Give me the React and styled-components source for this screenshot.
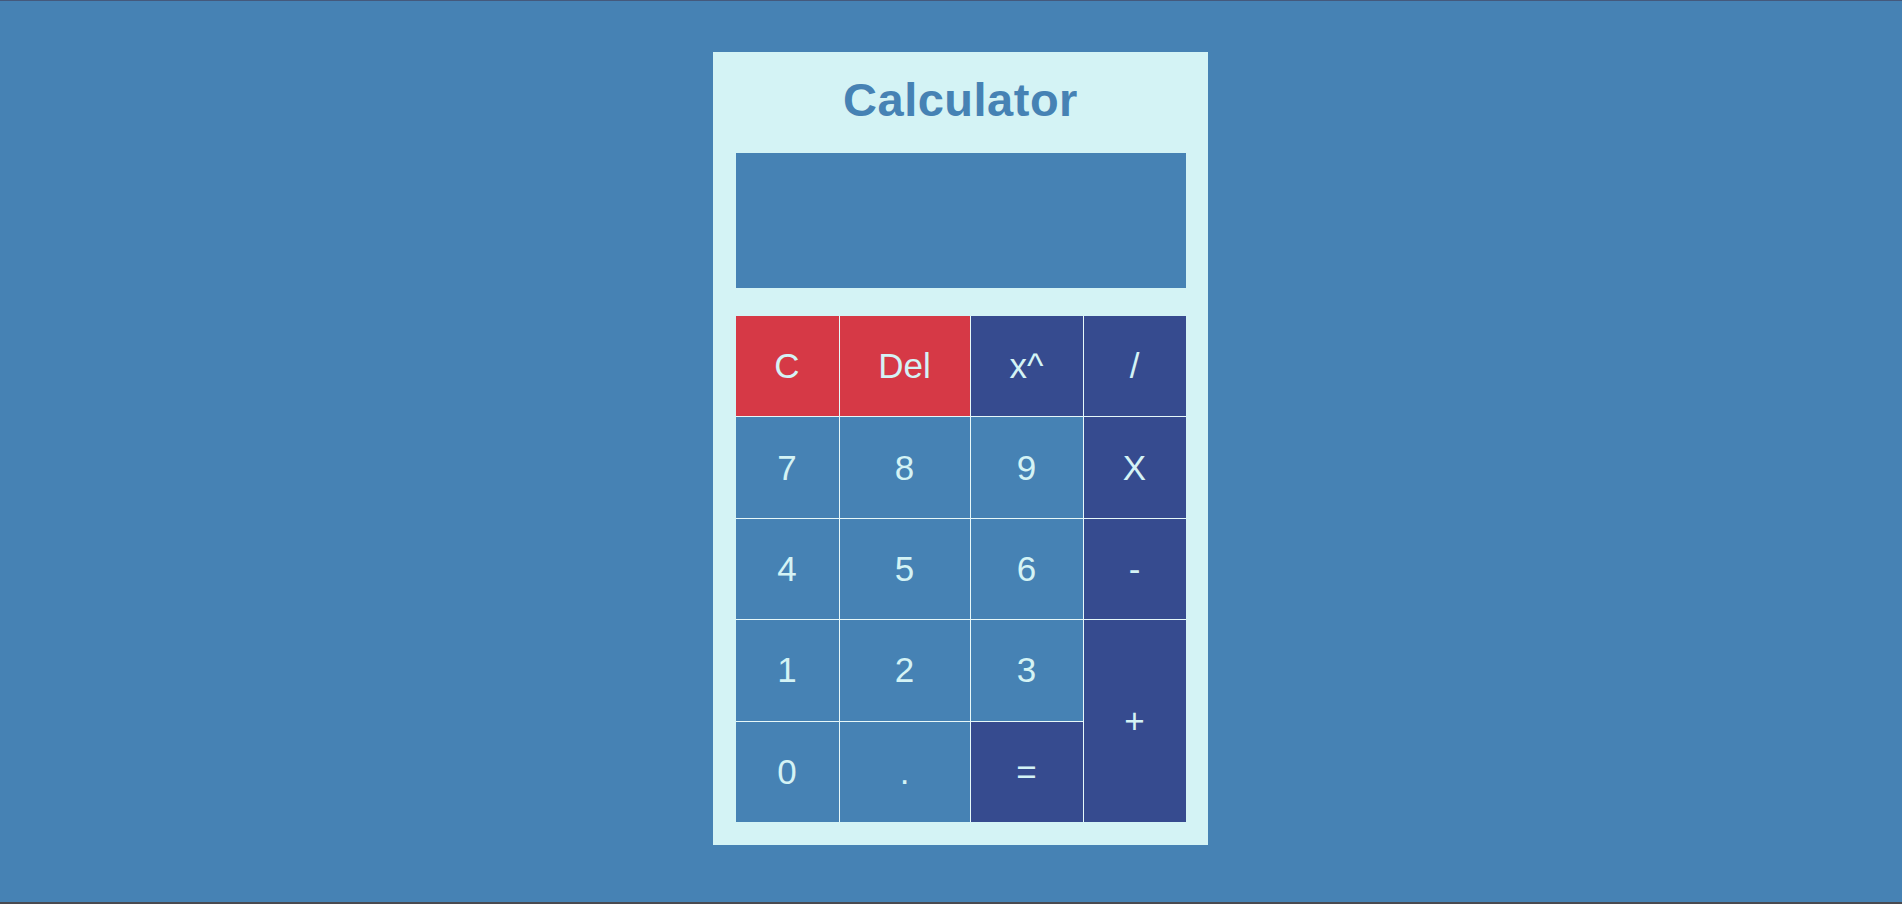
import React from "react";
import styled, { createGlobalStyle } from "styled-components";

const keys = [
    { label: "C", kind: "clear" },
    { label: "Del", kind: "clear" },
    { label: "x^", kind: "op" },
    { label: "/", kind: "op" },
    { label: "7" },
    { label: "8" },
    { label: "9" },
    { label: "X", kind: "op" },
    { label: "4" },
    { label: "5" },
    { label: "6" },
    { label: "-", kind: "op" },
    { label: "1" },
    { label: "2" },
    { label: "3" },
    { label: "+", kind: "op", tall: true },
    { label: "0" },
    { label: "." },
    { label: "=", kind: "op" },
];

const App = () => {
    return (
        <>
            <GlobalStyle />
            <Page>
                <Calculator>
                    <Title>Calculator</Title>
                    <Display />
                    <Keypad>
                        {keys.map((k) =>
                            <Key key={k.label} kind={k.kind} $tall={k.tall}>{k.label}</Key>
                        )}
                    </Keypad>
                </Calculator>
            </Page>
        </>
    )
}

const GlobalStyle = createGlobalStyle`
    *{
        box-sizing: border-box;
    }
    body{
        margin: 0;
        font-family: 'Liberation Sans', Arial, sans-serif;
        background-color: #4682b4;
    }
`

const Page = styled.div`
    width: 100%;
    height: 904px;
    display: flex;
    justify-content: center;
    align-items: flex-start;
    padding-top: 51px;
    padding-left: 19px;
    background-color: #4682b4;
    border-top: 1px solid #44597c;
    border-bottom: 2px solid #4a4a50;
`

const Calculator = styled.div`
    width: 495px;
    height: 793px;
    display: flex;
    flex-direction: column;
    align-items: center;
    padding: 0 22px;
    background-color: #d4f3f5;
`

const Title = styled.h1`
    margin: 0;
    height: 101px;
    display: flex;
    align-items: center;
    padding-bottom: 6px;
    font-family: 'Liberation Sans', Arial, sans-serif;
    font-weight: 700;
    font-size: 47px;
    letter-spacing: 0.5px;
    color: #4682b4;
`

const Display = styled.div`
    width: 450px;
    height: 135px;
    background-color: #4682b4;
`

const Keypad = styled.div`
    width: 450px;
    height: 506px;
    margin-top: 28px;
    display: grid;
    grid-template-columns: 103px 130px 112px 102px;
    grid-template-rows: repeat(5, 1fr);
    gap: 1px;
    background-color: #e6f8f9;
`

const Key = styled.button`
    border: none;
    padding: 0;
    display: flex;
    align-items: center;
    justify-content: center;
    grid-row: ${props => props.$tall ? "span 2" : "auto"};
    background-color: ${props => props.kind === "clear" ? "#d63946" : props.kind === "op" ? "#364b8f" : "#4682b4"};
    font-family: 'Liberation Sans', Arial, sans-serif;
    font-size: 35px;
    color: #d4f3f5;
`

export default App;
